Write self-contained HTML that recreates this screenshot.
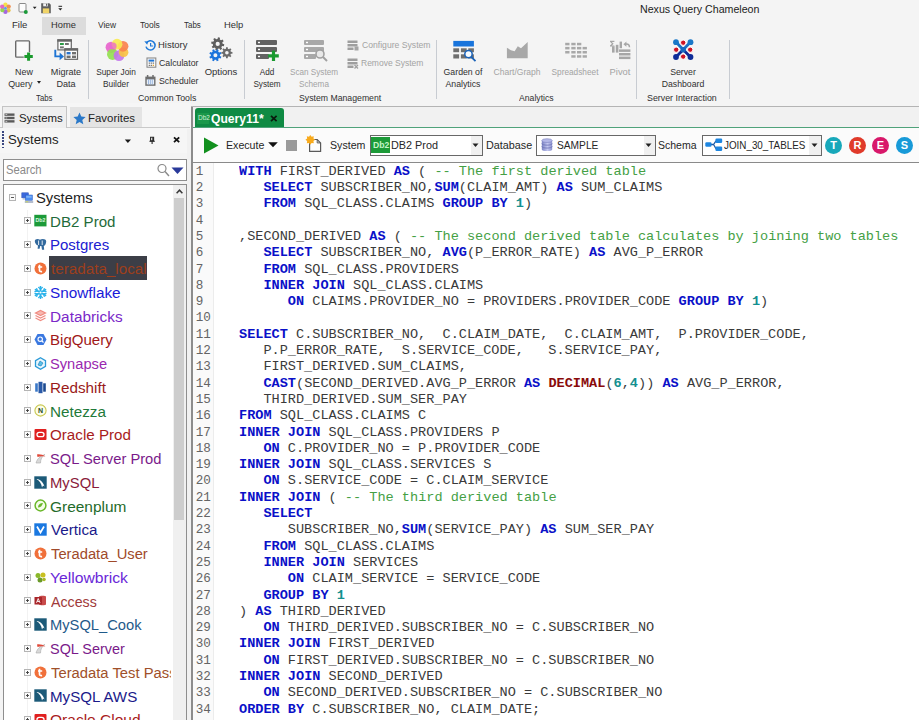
<!DOCTYPE html>
<html>
<head>
<meta charset="utf-8">
<title>Nexus Query Chameleon</title>
<style>
*{box-sizing:border-box;margin:0;padding:0}
html,body{width:919px;height:720px;overflow:hidden;background:#f4f4f4;font-family:"Liberation Sans",sans-serif;color:#1e1e1e}
.abs{position:absolute}
#app{position:relative;width:919px;height:720px;overflow:hidden;background:#f4f4f4}
.t{position:absolute;white-space:nowrap;line-height:1;transform-origin:0 0}
/* title */
#title{left:640px;top:3.6px;font-size:11.5px;color:#222;transform:scaleX(.92)}
/* menu */
.menu{top:20.300px;font-size:9.6px;color:#303030;transform:scaleX(.925)}
#hometab{left:42px;top:17px;width:44px;height:17.500px;background:#dcdcdc}
/* ribbon */
.rl{font-size:9.3px;color:#303030;margin-top:.8px;text-align:center;line-height:11.800px;white-space:nowrap;position:absolute;transform:scaleX(.943)}
.rl.la{transform-origin:0 0}
.rl.dis{color:#a3a3a3}
.grp{font-size:9.3px;color:#303030;margin-top:.6px;position:absolute;white-space:nowrap;line-height:12px;transform:scaleX(.943);transform-origin:0 0}
.sep{position:absolute;top:40px;width:1px;height:58.500px;background:#c8ccd2}
/* left panel */
#ltabline{left:0;top:127px;width:190px;height:1px;background:#c9c9c9}
#tabSys{left:2px;top:106px;width:65px;height:22px;background:#efefef;border:1px solid #c4c4c4;border-bottom:none}
#tabFav{left:70px;top:107px;width:72px;height:20px;background:#e4e4e4}
#syshead{left:0;top:129px;width:190px;height:24px;background:#f6f6f6}
#search{left:3px;top:159px;width:184px;height:21.500px;background:#fff;border:1px solid #8e8e8e}
#tree{left:3px;top:183.700px;width:184px;height:540px;background:#fff;border:1px solid #8e8e8e}
#vscroll{left:173px;top:185px;width:13px;height:535px;background:#f0f0f0}
#vthumb{left:173.700px;top:198px;width:10.600px;height:322px;background:#cdcdcd}
.ti{position:absolute;left:50px;font-size:15.5px;line-height:1;white-space:nowrap}
.exp{position:absolute;width:7px;height:7px;border:1px solid #b4b4b4;background:#fbfbfb}
.exp:before{content:"";position:absolute;left:1px;top:2px;width:3px;height:1px;background:#555}
.exp.p:after{content:"";position:absolute;left:2px;top:1px;width:1px;height:3px;background:#444}
.ic{position:absolute;width:13px;height:13px}
/* editor */
#edtabbar{left:193px;top:127px;width:726px;height:1px;background:#4fa27a}
#edtab{left:195px;top:107.500px;width:88.500px;height:20.500px;background:#0f8a43;border-radius:3px 3px 0 0}
#toolbar{left:193px;top:128px;width:726px;height:34px;background:#fbfbfb}
#splitter{left:187px;top:129px;width:4px;height:591px;background:#f1f1f1}
#editor{left:193px;top:161.500px;width:726px;height:560px;background:#fff;border-top:1px solid #8a8a8a}
#vline{left:191px;top:106px;width:2px;height:614px;background:#8c8c8c}
#hline{left:191px;top:105.500px;width:728px;height:1px;background:#b4b4b4}
#gutter{left:193px;top:163px;width:21px;height:557px;background:#fafafa;border-right:1px solid #ececec}
#code{position:absolute;left:0;top:163.800px;font-family:"Liberation Mono",monospace;font-size:12.2px;line-height:16.3px;color:#3a3a3a;white-space:pre}
#code .ln{position:absolute;left:195.800px;color:#646464;font-size:12.6px}
#code .cl{position:absolute;left:239px;transform:scaleX(1.113);transform-origin:0 0}
#code b{color:#0a10c8;font-weight:bold}
#code .c{color:#44a044}
#code .n{color:#149090;font-weight:bold}
#code .d{color:#8a0a0a;font-weight:bold}
.combo{position:absolute;top:135px;height:20.800px;background:#fff;border:1px solid #686868}
.combo:after{content:"";position:absolute;right:0;top:0;width:11.500px;height:18.800px;background:#f0f0f0}
.tb{position:absolute;font-size:10.6px;color:#262626;white-space:nowrap;line-height:1;top:140.300px}
.circ{position:absolute;top:136.700px;width:17.400px;height:17.400px;margin-left:.8px;border-radius:50%;color:#fff;font-size:11px;font-weight:bold;text-align:center;line-height:17.400px}
</style>
</head>
<body>
<div id="app">
<!-- TITLE -->
<div class="t" id="title" style="left:640.00px;;transform-origin:0 0;transform:scaleX(0.925)">Nexus Query Chameleon</div>

<!-- MENU -->
<div class="abs" id="hometab"></div>
<div class="t menu" id="m_File" style="left:12.00px;transform:scaleX(0.996)">File</div>
<div class="t menu" id="m_Home" style="left:50.50px;transform:scaleX(0.971)">Home</div>
<div class="t menu" id="m_View" style="left:98.00px;transform:scaleX(0.876)">View</div>
<div class="t menu" id="m_Tools" style="left:140.00px;transform:scaleX(0.881)">Tools</div>
<div class="t menu" id="m_Tabs" style="left:184.00px;transform:scaleX(0.828)">Tabs</div>
<div class="t menu" id="m_Help" style="left:224.00px;transform:scaleX(0.981)">Help</div>

<!-- RIBBON placeholder -->
<div id="ribbon">
<!-- quick access toolbar -->
<svg class="abs" style="left:0;top:2px" width="70" height="14" viewBox="0 0 70 14">
 <g opacity=".95">
  <circle cx="5.400" cy="2.800" r="2.200" fill="#f4e040"/><circle cx="8.600" cy="4.600" r="2.200" fill="#f08a4a"/>
  <circle cx="8.400" cy="8.200" r="2.200" fill="#e8c040"/><circle cx="5.400" cy="9.800" r="2.200" fill="#a060e0"/>
  <circle cx="2.400" cy="8" r="2.200" fill="#8fd44a"/><circle cx="2.200" cy="4.600" r="2.200" fill="#e060c0"/><circle cx="5.400" cy="6.300" r="1.500" fill="#5a9ae8"/>
 </g>
 <rect x="19" y="1.500" width="7" height="8.500" rx="1" fill="#fcfcfc" stroke="#8a8a8a" stroke-width="1"/>
 <circle cx="25.800" cy="10" r="2" fill="#1c9a3a"/>
 <path d="M32.800 4.800h3.800l-1.900 2.300z" fill="#222"/>
 <path d="M41.200 1.300h8.200l1.400 1.400v8.500h-9.600z" fill="#5e5e5e"/>
 <rect x="43.200" y="1.300" width="4.800" height="3" fill="#f0f0f0"/><rect x="46" y="1.800" width="1.300" height="2" fill="#5e5e5e"/>
 <rect x="42.800" y="6.400" width="6.400" height="4.800" fill="#f0d468"/>
 <path d="M58.500 4.300h3.600" stroke="#222" stroke-width="1"/><path d="M58.300 6.300h4l-2 2.300z" fill="#222"/>
</svg>

<!-- New Query -->
<svg class="abs" style="left:13px;top:39px" width="22" height="23" viewBox="0 0 22 23">
 <rect x="2.700" y="1.900" width="13.800" height="16.200" rx=".8" fill="#fafafa" stroke="#6a6a6a" stroke-width="1.400"/>
 <rect x="10.800" y="13" width="10" height="9.500" fill="#f4f4f4"/>
 <path d="M15.600 13.400v8.400M11.400 17.600h8.400" stroke="#1a9a2c" stroke-width="3"/>
</svg>
<div id="r_new" class="rl" style="left:4.00px;top:66px;width:40px;transform:scaleX(0.959)">New<br>Query &nbsp;&nbsp;</div><svg class="abs" style="left:36.800px;top:81.300px" width="4" height="3" viewBox="0 0 4 3"><path d="M0 0h4l-2 2.800z" fill="#222"/></svg>

<!-- Migrate Data -->
<svg class="abs" style="left:53px;top:38px" width="26" height="24" viewBox="0 0 26 24">
 <rect x="4.900" y="1.900" width="13.400" height="10" fill="#fcfcfc" stroke="#666" stroke-width="1.200"/>
 <rect x="4.300" y="1.300" width="14.600" height="2.400" fill="#666"/>
 <rect x="7" y="5" width="3.800" height="2" fill="#2a9a44"/><rect x="12" y="5" width="3.800" height="2" fill="#707070"/>
 <rect x="7" y="8.400" width="3.800" height="2" fill="#707070"/>
 <rect x="11.900" y="10.900" width="12.600" height="10.400" fill="#fcfcfc" stroke="#666" stroke-width="1.200"/>
 <rect x="11.300" y="10.300" width="13.800" height="2.400" fill="#666"/>
 <rect x="13.600" y="14" width="4" height="2.400" fill="#2a74cc"/><rect x="19" y="14" width="4" height="2.400" fill="#707070"/>
 <rect x="13.600" y="17.600" width="4" height="2.400" fill="#707070"/><rect x="19" y="17.600" width="4" height="2.400" fill="#707070"/>
 <path d="M2.300 11.800v6.600h5.200" fill="none" stroke="#1e74d4" stroke-width="1.900"/><path d="M6.600 14.600l4.400 3.800-4.400 3.800z" fill="#1e74d4"/>
</svg>
<div id="r_mig" class="rl" style="left:45.50px;top:66px;width:40px;transform:scaleX(0.978)">Migrate<br>Data</div>

<div class="sep" style="left:88px"></div>

<!-- Super Join Builder -->
<svg class="abs" style="left:104px;top:38px" width="26" height="25" viewBox="0 0 26 25"><circle cx="7.200" cy="9.300" r="5.600" fill="#e860cc" opacity=".9"/><circle cx="8.600" cy="16.300" r="5.600" fill="#92e04e" opacity=".9"/><circle cx="15" cy="17.600" r="5.400" fill="#c274ea" opacity=".9"/><circle cx="19.600" cy="14.300" r="4.800" fill="#f8c244" opacity=".92"/><circle cx="19" cy="8.300" r="5.400" fill="#f8824e" opacity=".92"/><circle cx="13" cy="6.200" r="5.400" fill="#f8ea54" opacity=".92"/><circle cx="9" cy="8" r="3.600" fill="#e868d0" opacity=".75"/></svg>
<div id="r_sj" class="rl" style="left:91.30px;top:66px;width:50px;transform:scaleX(0.893)">Super Join<br>Builder</div>

<!-- History / Calculator / Scheduler -->
<svg class="abs" style="left:144px;top:39px" width="13" height="13" viewBox="0 0 13 13">
 <path d="M2.4 4.2A4.6 4.6 0 1 1 2 7.6" fill="none" stroke="#1e78d8" stroke-width="1.5"/>
 <path d="M0.3 2.2l3.8 0.2-0.9 3.4z" fill="#1e78d8"/><path d="M6.6 4v3h2.6" fill="none" stroke="#1e78d8" stroke-width="1.2"/>
</svg>
<div id="r_his" class="rl la" style="left:158.00px;top:39.5px;transform:scaleX(1.019)">History</div>
<svg class="abs" style="left:145.500px;top:57.300px" width="11" height="11" viewBox="0 0 11 11">
 <rect x="1" y="1" width="8.800" height="9.200" fill="#fdfdfd" stroke="#8a8a8a" stroke-width="1.100"/>
 <rect x="2.600" y="2.600" width="5.600" height="2" fill="#1e74d4"/>
 <path d="M2.700 6.200h1.400M4.700 6.200h1.400M6.700 6.200h1.400" stroke="#7a7a7a" stroke-width="1.200"/><path d="M2.700 8.300h1.400M4.700 8.300h1.400" stroke="#7a7a7a" stroke-width="1.200"/><path d="M6.700 8.300h1.400" stroke="#e0a020" stroke-width="1.200"/>
</svg>
<div id="r_cal" class="rl la" style="left:159.00px;top:57.5px;transform:scaleX(0.943)">Calculator</div>
<svg class="abs" style="left:144px;top:74px" width="13" height="13" viewBox="0 0 13 13">
 <rect x="1.300" y="2.600" width="10.200" height="9.200" fill="#6e6e6e"/>
 <path d="M3.600 1v2.600M9 1v2.600" stroke="#6e6e6e" stroke-width="1.500"/>
 <rect x="2.700" y="5.400" width="7.400" height="5" fill="#e8f0fa"/>
 <path d="M4.500 5.400v5M6.400 5.400v5M8.300 5.400v5" stroke="#8aaad8" stroke-width=".8"/>
</svg>
<div id="r_sch" class="rl la" style="left:159.00px;top:75.5px;transform:scaleX(0.943)">Scheduler</div>

<!-- Options -->
<svg class="abs" style="left:208px;top:36px" width="28" height="28" viewBox="0 0 28 28"><path fill-rule="evenodd" fill="#5e5e5e" d="M14.60 7.73L16.29 8.18L15.88 10.21L14.14 9.97L13.29 11.24L14.16 12.76L12.44 13.90L11.38 12.50L9.87 12.80L9.42 14.49L7.39 14.08L7.63 12.34L6.36 11.49L4.84 12.36L3.70 10.64L5.10 9.58L4.80 8.07L3.11 7.62L3.52 5.59L5.26 5.83L6.11 4.56L5.24 3.04L6.96 1.90L8.02 3.30L9.53 3.00L9.98 1.31L12.01 1.72L11.77 3.46L13.04 4.31L14.56 3.44L15.70 5.16L14.30 6.22zM7.60 7.90a2.10 2.10 0 1 0 4.20 0a2.10 2.10 0 1 0 -4.20 0z"/><path fill-rule="evenodd" fill="#6a6a6a" d="M22.89 15.84L24.43 15.92L24.43 17.68L22.89 17.76L22.40 18.94L23.43 20.09L22.19 21.33L21.04 20.30L19.86 20.79L19.78 22.33L18.02 22.33L17.94 20.79L16.76 20.30L15.61 21.33L14.37 20.09L15.40 18.94L14.91 17.76L13.37 17.68L13.37 15.92L14.91 15.84L15.40 14.66L14.37 13.51L15.61 12.27L16.76 13.30L17.94 12.81L18.02 11.27L19.78 11.27L19.86 12.81L21.04 13.30L22.19 12.27L23.43 13.51L22.40 14.66zM17.10 16.80a1.80 1.80 0 1 0 3.60 0a1.80 1.80 0 1 0 -3.60 0z"/><path fill-rule="evenodd" fill="#1c74dc" d="M11.94 20.05L13.42 20.79L12.66 22.58L11.10 22.03L10.08 23.04L10.60 24.61L8.80 25.34L8.09 23.85L6.65 23.84L5.91 25.32L4.12 24.56L4.67 23.00L3.66 21.98L2.09 22.50L1.36 20.70L2.85 19.99L2.86 18.55L1.38 17.81L2.14 16.02L3.70 16.57L4.72 15.56L4.20 13.99L6.00 13.26L6.71 14.75L8.15 14.76L8.89 13.28L10.68 14.04L10.13 15.60L11.14 16.62L12.71 16.10L13.44 17.90L11.95 18.61zM5.40 19.30a2.00 2.00 0 1 0 4.00 0a2.00 2.00 0 1 0 -4.00 0z"/></svg>
<div id="r_opt" class="rl" style="left:196.40px;top:66px;width:50px;transform:scaleX(1.021)">Options</div>

<div class="sep" style="left:244px"></div>

<!-- Add System -->
<svg class="abs" style="left:255px;top:39px" width="27" height="23" viewBox="0 0 27 23">
 <rect x="1" y="1" width="21" height="5" rx="1" fill="#626262"/><rect x="1" y="8" width="21" height="5" rx="1" fill="#626262"/>
 <rect x="1" y="15" width="13" height="5" rx="1" fill="#626262"/>
 <rect x="3" y="2.8" width="2" height="1.4" fill="#fff"/><rect x="3" y="9.8" width="2" height="1.4" fill="#fff"/><rect x="3" y="16.8" width="2" height="1.4" fill="#fff"/>
 <path d="M18.500 11.500v10.500M13.200 16.800h10.600" stroke="#1a9a30" stroke-width="3.200"/>
</svg>
<div id="r_add" class="rl" style="left:247.40px;top:66px;width:40px;transform:scaleX(0.877)">Add<br>System</div>

<!-- Scan System Schema (disabled) -->
<svg class="abs" style="left:303px;top:39px" width="27" height="23" viewBox="0 0 27 23">
 <rect x="1" y="1" width="20" height="5" rx="1" fill="#a8a8a8"/><rect x="1" y="8" width="20" height="5" rx="1" fill="#a8a8a8"/>
 <rect x="1" y="15" width="12" height="5" rx="1" fill="#a8a8a8"/>
 <rect x="3" y="2.800" width="2" height="1.400" fill="#fff"/><rect x="3" y="9.800" width="2" height="1.400" fill="#fff"/><rect x="3" y="16.800" width="2" height="1.400" fill="#fff"/>
 <circle cx="17" cy="15" r="4" fill="#e8e8e8" stroke="#a0a0a0" stroke-width="1.6"/><path d="M20 18l4 4" stroke="#a0a0a0" stroke-width="2"/>
</svg>
<div id="r_scan" class="rl dis" style="left:284.30px;top:66px;width:60px;transform:scaleX(0.877)">Scan System<br>Schema</div>

<!-- Configure / Remove -->
<svg class="abs" style="left:347px;top:40px" width="12" height="11" viewBox="0 0 12 11">
 <rect x=".5" y=".5" width="10" height="2.500" fill="#9e9e9e"/><rect x=".5" y="4" width="10" height="2.500" fill="#9e9e9e"/><rect x=".5" y="7.500" width="6" height="2.500" fill="#9e9e9e"/>
 <rect x="7.500" y="6.500" width="4" height="4" fill="#a4a4a4"/>
</svg>
<div id="r_cfg" class="rl dis la" style="left:362.40px;top:39.5px;transform:scaleX(0.927)">Configure System</div>
<svg class="abs" style="left:347px;top:58px" width="12" height="11" viewBox="0 0 12 11">
 <rect x=".5" y=".5" width="10" height="2.500" fill="#9e9e9e"/><rect x=".5" y="4" width="10" height="2.500" fill="#9e9e9e"/><rect x=".5" y="7.500" width="6" height="2.500" fill="#9e9e9e"/>
 <path d="M7.500 7l3.500 3.500M11 7l-3.500 3.500" stroke="#a0a0a0" stroke-width="1.300"/>
</svg>
<div id="r_rem" class="rl dis la" style="left:361.00px;top:57.5px;transform:scaleX(0.914)">Remove System</div>

<div class="sep" style="left:436px"></div>

<!-- Garden of Analytics -->
<svg class="abs" style="left:452px;top:40px" width="25" height="23" viewBox="0 0 25 23">
 <rect x="1.300" y=".9" width="20.600" height="5.600" fill="#1874dc"/>
 <g fill="#6e6e6e"><rect x="1.300" y="8.300" width="5.800" height="3.900"/><rect x="8.900" y="8.300" width="5.800" height="3.900"/><rect x="16.300" y="8.300" width="5.600" height="3.900"/>
 <rect x="1.300" y="14.300" width="5.800" height="4.200"/><rect x="8.900" y="14.300" width="5.800" height="4.200"/><rect x="16.300" y="14.300" width="5.600" height="4.200"/></g>
 <circle cx="16.500" cy="14.100" r="3.700" fill="#f6fafe" stroke="#1a62b8" stroke-width="1.500"/><path d="M19.200 16.900l4.300 4.300" stroke="#1a62b8" stroke-width="1.800"/>
</svg>
<div id="r_gar" class="rl" style="left:438.30px;top:66px;width:50px;transform:scaleX(0.939)">Garden of<br>Analytics</div>

<!-- Chart/Graph -->
<svg class="abs" style="left:506px;top:41px" width="23" height="18" viewBox="0 0 23 18">
 <path d="M.9 17.200V6.800L5 9.200 8.600 10.200 11.800 5.200 15 7.200 21.700 .9V17.200z" fill="#a8a8a8"/>
</svg>
<div id="r_chart" class="rl dis" style="left:487.20px;top:66px;width:60px;transform:scaleX(0.920)">Chart/Graph</div>

<!-- Spreadsheet -->
<svg class="abs" style="left:565px;top:42px" width="23" height="17" viewBox="0 0 23 17"><g fill="#a8a8a8"><rect x="0.2" y="0.8" width="4.300" height="2.500"/><rect x="6.3" y="0.8" width="4.300" height="2.500"/><rect x="12.0" y="0.8" width="4.300" height="2.500"/><rect x="0.2" y="4.9" width="4.300" height="2.500"/><rect x="6.3" y="4.9" width="4.300" height="2.500"/><rect x="12.0" y="4.9" width="4.300" height="2.500"/><rect x="17.6" y="4.9" width="4.300" height="2.500"/><rect x="0.2" y="9.0" width="4.300" height="2.500"/><rect x="6.3" y="9.0" width="4.300" height="2.500"/><rect x="12.0" y="9.0" width="4.300" height="2.500"/><rect x="17.6" y="9.0" width="4.300" height="2.500"/><rect x="6.3" y="13.2" width="4.300" height="2.500"/><rect x="12.0" y="13.2" width="4.300" height="2.500"/><rect x="17.6" y="13.2" width="4.300" height="2.500"/></g></svg>
<div id="r_spr" class="rl dis" style="left:545.40px;top:66px;width:60px;transform:scaleX(0.889)">Spreadsheet</div>

<!-- Pivot -->
<svg class="abs" style="left:609px;top:40px" width="23" height="20" viewBox="0 0 23 20">
 <g fill="#a6a6a6">
 <path d="M1 .8h4.400v1.100H2.900l1.700 1.800-1.700 1.800h2.500v1.100H1V5.600l1.900-1.900L1 1.800z"/>
 <rect x="3" y="6.300" width="2.600" height="6.300"/><rect x="6.800" y="4.800" width="2.600" height="7.800"/><rect x="10.600" y="1.600" width="2.400" height="6.600"/>
 <rect x="10" y="9.400" width="11.400" height="2.500"/><rect x="10" y="13" width="11.400" height="2.500"/><rect x="10" y="16.600" width="11.400" height="2.500"/>
 <path d="M14.400 4.200l3-2.600v1.700c2.600 0 3.800 1.400 3.800 4h-1.500c0-1.700-.8-2.500-2.300-2.500v2z"/>
 </g>
</svg>
<div id="r_piv" class="rl dis" style="left:589.90px;top:66px;width:60px;transform:scaleX(1.005)">Pivot</div>

<div class="sep" style="left:636px"></div>

<!-- Server Dashboard -->
<svg class="abs" style="left:671px;top:38px" width="25" height="25" viewBox="0 0 25 25">
 <path d="M5 4L12.200 11.700 19.500 4" fill="none" stroke="#1a70c4" stroke-width="2.800" stroke-linecap="round"/>
 <path d="M5 19L12.200 11.700 19.500 19" fill="none" stroke="#0e2c98" stroke-width="2.800" stroke-linecap="round"/>
 <circle cx="5" cy="4.200" r="2.900" fill="#1a78c8"/><circle cx="19.500" cy="4.200" r="2.900" fill="#1a78c8"/>
 <circle cx="5" cy="19" r="2.900" fill="#0e2c98"/><circle cx="19.500" cy="19" r="2.900" fill="#0e2c98"/>
 <circle cx="12.200" cy="11.700" r="2.700" fill="#1868c0"/>
 <g fill="#d01424" stroke="#fff" stroke-width="1"><circle cx="12.200" cy="4.700" r="2.700"/><circle cx="12.200" cy="18.600" r="2.700"/><circle cx="5.200" cy="11.700" r="2.700"/><circle cx="19.200" cy="11.700" r="2.700"/></g>
</svg>
<div id="r_srv" class="rl" style="left:653.20px;top:66px;width:60px;transform:scaleX(0.935)">Server<br>Dashboard</div>

<div class="sep" style="left:729px"></div>

<!-- group labels -->
<div id="g_tabs" class="grp" style="left:36.20px;top:91px;transform:scaleX(0.835)">Tabs</div>
<div id="g_ct" class="grp" style="left:138.00px;top:91px;transform:scaleX(0.943)">Common Tools</div>
<div id="g_sm" class="grp" style="left:299.00px;top:91px;transform:scaleX(0.936)">System Management</div>
<div id="g_an" class="grp" style="left:519.10px;top:91px;transform:scaleX(0.933)">Analytics</div>
<div id="g_si" class="grp" style="left:647.40px;top:91px;transform:scaleX(0.951)">Server Interaction</div>
<div class="abs" style="left:0;top:103px;width:191px;height:26px;background:#f6f6f6"></div><div class="abs" style="left:191px;top:106px;width:728px;height:22px;background:#f1f1f1"></div>
</div>


<!-- LEFT PANEL -->
<div class="abs" id="ltabline"></div>
<div class="abs" id="tabFav"></div>
<div class="abs" id="tabSys"></div>
<div class="abs" id="syshead"></div>
<div class="abs" id="search"></div>
<div class="abs" id="tree"></div>
<div class="abs" id="vscroll"></div>
<div class="abs" id="vthumb"></div>
<svg class="abs" style="left:175.500px;top:189.300px" width="7" height="5" viewBox="0 0 7 5"><path d="M.6 4.200l2.900-3L6.400 4.200" fill="none" stroke="#3a3a3a" stroke-width="1.500"/></svg>
<div class="abs" style="left:27px;top:210px;width:1px;height:510px;background:#f2f2f2"></div>
<div id="treeitems">
<div class="exp" style="left:9px;top:194.2px"></div>
<svg class="ic" style="left:20.800px;top:191.7px" viewBox="0 0 13 13"><rect x=".8" y=".8" width="6.600" height="5" fill="#3a68dc" stroke="#2a50b4" stroke-width=".5"/><rect x="1.600" y="6" width="5" height="1.600" fill="#b8c4d8"/><rect x="4.400" y="3" width="7" height="5.400" fill="#4a8cf0" stroke="#2a58c0" stroke-width=".5"/><rect x="5.200" y="3.800" width="5.400" height="2" fill="#7ab0f8"/><rect x="3.800" y="8.800" width="8.400" height="2.200" fill="#b4bccc"/><rect x="4.600" y="9.300" width="2.600" height="1" fill="#c8d860"/></svg>
<div class="ti" id="ti0" style="left:36.1px;top:189.5px;color:#1e1e1e;transform:scaleX(0.953);transform-origin:0 0">Systems</div>
<div class="exp p" style="left:24px;top:217.3px"></div>
<svg class="ic" style="left:34px;top:214.3px" viewBox="0 0 13 13"><rect x=".3" y=".8" width="12.200" height="11.600" fill="#1c9a38"/><text x="6.400" y="8.400" font-family="Liberation Sans" font-size="5.200" font-weight="bold" fill="#dcf8e0" text-anchor="middle">Db2</text></svg>
<div class="ti" id="ti1" style="left:49.8px;top:213.5px;color:#1f6b3a;transform:scaleX(0.974);transform-origin:0 0">DB2 Prod</div>
<div class="exp p" style="left:24px;top:241.1px"></div>
<svg class="ic" style="left:34px;top:238.1px" viewBox="0 0 13 13"><path d="M.8 3c0-2 3.200-2.600 5.200-1.200C8 .4 12.200 .8 12.200 3.400c0 2.200-1.200 4-2.400 4.600l.4 3.800H8L7.400 8 6.200 8 5.600 10.800H3.600L4 7.600C2.200 7 .8 5 .8 3z" fill="#336a9e"/><path d="M4.600 2.500v4.500M8.200 2.500v4.500" stroke="#f4f8fc" stroke-width=".9"/></svg>
<div class="ti" id="ti2" style="left:49.8px;top:237.2px;color:#2020d0;transform:scaleX(0.968);transform-origin:0 0">Postgres</div>
<div class="abs" style="left:48.500px;top:256.3px;width:98.500px;height:23.500px;background:#3c3e47"></div>
<div class="exp p" style="left:24px;top:264.8px"></div>
<svg class="ic" style="left:34px;top:261.8px" viewBox="0 0 13 13"><circle cx="6.500" cy="6.500" r="6" fill="#f0703a"/><path d="M5.500 2.800v5.200c0 1.300.8 1.800 2.600 1.600M4 5h4.200" fill="none" stroke="#fff" stroke-width="1.700"/></svg>
<div class="ti" id="ti3" style="left:50.8px;top:261.0px;color:#9e3e1c;transform:scaleX(0.982);transform-origin:0 0">teradata_local</div>
<div class="exp p" style="left:24px;top:288.6px"></div>
<svg class="ic" style="left:34px;top:285.6px" viewBox="0 0 13 13"><g stroke="#2ab2ea" stroke-width="1.900" stroke-linecap="round" fill="none"><path d="M6.500 .9v11.200M1.600 3.700l9.800 5.600M1.600 9.300l9.800-5.600"/><path d="M4.600 1.400l1.900 1.800 1.900-1.800M4.600 11.600l1.900-1.800 1.900 1.800M.9 5.600l2.600-.6-.8-2.500M12.100 7.400l-2.600.6.800 2.500M.9 7.400l2.600.6-.8 2.500M12.100 5.600l-2.600-.6.800-2.500" stroke-width="1.200"/></g><circle cx="6.500" cy="6.500" r="1.100" fill="#fff"/></svg>
<div class="ti" id="ti4" style="left:49.8px;top:284.8px;color:#1a1ad8;transform:scaleX(0.987);transform-origin:0 0">Snowflake</div>
<div class="exp p" style="left:24px;top:312.3px"></div>
<svg class="ic" style="left:34px;top:309.3px" viewBox="0 0 13 13"><g fill="none" stroke="#f08a80" stroke-width="1.200"><path d="M1.500 4L6.500 1.500 11.500 4 6.500 6.500z" fill="#f8b8b0"/><path d="M1.500 6.500L6.500 9l5-2.500M1.500 9l5 2.500 5-2.500"/></g></svg>
<div class="ti" id="ti5" style="left:49.8px;top:308.5px;color:#7a28c8;transform:scaleX(0.991);transform-origin:0 0">Databricks</div>
<div class="exp p" style="left:24px;top:336.1px"></div>
<svg class="ic" style="left:34px;top:333.1px" viewBox="0 0 13 13"><path d="M3.500 1h6l3 5.500-3 5.500h-6l-3-5.500z" fill="#3a78e0"/><circle cx="6.200" cy="6.200" r="2.200" fill="none" stroke="#fff" stroke-width="1.100"/><path d="M7.800 7.800l1.700 1.700" stroke="#fff" stroke-width="1.200"/></svg>
<div class="ti" id="ti6" style="left:49.8px;top:332.2px;color:#a01818;transform:scaleX(0.971);transform-origin:0 0">BigQuery</div>
<div class="exp p" style="left:24px;top:359.8px"></div>
<svg class="ic" style="left:34px;top:356.8px" viewBox="0 0 13 13"><path d="M6.500 .8l5 2.900v5.600l-5 2.900-5-2.900V3.700z" fill="#e8f6fc" stroke="#2a9ad8" stroke-width="1.300"/><path d="M4 8l2-4 3 2-2 3z" fill="#58c0e8" stroke="#1a78b8" stroke-width=".6"/></svg>
<div class="ti" id="ti7" style="left:49.8px;top:356.0px;color:#9a28b0;transform:scaleX(0.946);transform-origin:0 0">Synapse</div>
<div class="exp p" style="left:24px;top:383.6px"></div>
<svg class="ic" style="left:34px;top:380.6px" viewBox="0 0 13 13"><rect x="4.500" y=".8" width="4" height="11.400" fill="#2a5aa8"/><rect x="1.200" y="2.300" width="2.600" height="8.400" fill="#3a78c8"/><rect x="9.200" y="2.300" width="2.600" height="8.400" fill="#1c4a90"/></svg>
<div class="ti" id="ti8" style="left:49.8px;top:379.8px;color:#9a1a1a;transform:scaleX(0.984);transform-origin:0 0">Redshift</div>
<div class="exp p" style="left:24px;top:407.3px"></div>
<svg class="ic" style="left:34px;top:404.3px" viewBox="0 0 13 13"><circle cx="6.500" cy="6.500" r="5.600" fill="#fdfde8" stroke="#c8c850" stroke-width="1.100"/><text x="6.500" y="9" font-family="Liberation Sans" font-weight="bold" font-size="7" fill="#1a4a2a" text-anchor="middle">N</text></svg>
<div class="ti" id="ti9" style="left:49.8px;top:403.5px;color:#1f7a3a;transform:scaleX(0.984);transform-origin:0 0">Netezza</div>
<div class="exp p" style="left:24px;top:431.1px"></div>
<svg class="ic" style="left:34px;top:428.1px" viewBox="0 0 13 13"><rect x=".5" y="1" width="12" height="11" rx="1" fill="#e02020"/><rect x="3" y="4.300" width="7" height="4.400" rx="2.200" fill="none" stroke="#fff" stroke-width="1.300"/></svg>
<div class="ti" id="ti10" style="left:49.8px;top:427.2px;color:#a81c1c;transform:scaleX(0.979);transform-origin:0 0">Oracle Prod</div>
<div class="exp p" style="left:24px;top:454.8px"></div>
<svg class="ic" style="left:34px;top:451.8px" viewBox="0 0 13 13"><path d="M2 11C3 7 6 4 11 2.500 8 4.500 6.500 7 6.500 11z" fill="#d8d8d8" stroke="#a8a8a8" stroke-width=".6"/><path d="M3 2.500c3-.5 6 .5 8.500 2C9 4 6 4 3.500 5z" fill="#e04a3a"/></svg>
<div class="ti" id="ti11" style="left:49.6px;top:451.0px;color:#7a1a8a;transform:scaleX(0.949);transform-origin:0 0">SQL Server Prod</div>
<div class="exp p" style="left:24px;top:478.6px"></div>
<svg class="ic" style="left:34px;top:475.6px" viewBox="0 0 13 13"><rect x=".3" y=".3" width="12.400" height="12.400" fill="#1c5a78"/><path d="M2.500 3c3 0 6 2 8 7.500L9 9.500 8 11.500C7.500 7.500 5.500 5 2.500 3z" fill="#fff"/></svg>
<div class="ti" id="ti12" style="left:49.6px;top:474.8px;color:#8a1a3a;transform:scaleX(0.956);transform-origin:0 0">MySQL</div>
<div class="exp p" style="left:24px;top:502.3px"></div>
<svg class="ic" style="left:34px;top:499.3px" viewBox="0 0 13 13"><circle cx="6.500" cy="6.500" r="5.400" fill="#f4fce8" stroke="#6ab82a" stroke-width="1.500"/><path d="M4 8.500c0-3 2-4.500 5-4.500-1 3-2.500 4.500-5 4.500z" fill="#6ab82a"/></svg>
<div class="ti" id="ti13" style="left:49.6px;top:498.5px;color:#1f6b2a;transform:scaleX(0.996);transform-origin:0 0">Greenplum</div>
<div class="exp p" style="left:24px;top:526.0px"></div>
<svg class="ic" style="left:34px;top:523.0px" viewBox="0 0 13 13"><rect x=".3" y=".3" width="12.400" height="12.400" fill="#1a78e0"/><path d="M3 3.500l3.500 6 3.500-6" fill="none" stroke="#fff" stroke-width="1.700"/></svg>
<div class="ti" id="ti14" style="left:50.6px;top:522.2px;color:#1a1a8a;transform:scaleX(0.980);transform-origin:0 0">Vertica</div>
<div class="exp p" style="left:24px;top:549.8px"></div>
<svg class="ic" style="left:34px;top:546.8px" viewBox="0 0 13 13"><circle cx="6.500" cy="6.500" r="6" fill="#f0703a"/><path d="M5.500 2.800v5.200c0 1.300.8 1.800 2.600 1.600M4 5h4.200" fill="none" stroke="#fff" stroke-width="1.700"/></svg>
<div class="ti" id="ti15" style="left:50.6px;top:546.0px;color:#a04a2a;transform:scaleX(0.952);transform-origin:0 0">Teradata_User</div>
<div class="exp p" style="left:24px;top:573.5px"></div>
<svg class="ic" style="left:34px;top:570.5px" viewBox="0 0 13 13"><circle cx="4" cy="4.500" r="2.500" fill="#8ab82a"/><circle cx="9" cy="4" r="2.500" fill="#c8c020"/><circle cx="6" cy="9" r="2.500" fill="#6a9a2a"/><circle cx="10" cy="8.500" r="1.800" fill="#a8b828"/></svg>
<div class="ti" id="ti16" style="left:49.6px;top:569.8px;color:#6a28d8;transform:scaleX(1.013);transform-origin:0 0">Yellowbrick</div>
<div class="exp p" style="left:24px;top:597.3px"></div>
<svg class="ic" style="left:34px;top:594.3px" viewBox="0 0 13 13"><path d="M5 2.500c0-1 7-1 7 0v8c0 1-7 1-7 0z" fill="#c84a4a"/><rect x=".5" y="3" width="7.500" height="7.500" fill="#a8262a"/><path d="M2.500 8.800L4.200 4.500 6 8.800M3.200 7.500h2" fill="none" stroke="#fff" stroke-width=".9"/></svg>
<div class="ti" id="ti17" style="left:50.6px;top:593.5px;color:#a03a3a;transform:scaleX(0.917);transform-origin:0 0">Access</div>
<div class="exp p" style="left:24px;top:621.0px"></div>
<svg class="ic" style="left:34px;top:618.0px" viewBox="0 0 13 13"><rect x=".3" y=".3" width="12.400" height="12.400" fill="#1c5a78"/><path d="M2.500 3c3 0 6 2 8 7.500L9 9.500 8 11.500C7.500 7.500 5.500 5 2.500 3z" fill="#fff"/></svg>
<div class="ti" id="ti18" style="left:49.6px;top:617.2px;color:#1f5a8a;transform:scaleX(0.949);transform-origin:0 0">MySQL_Cook</div>
<div class="exp p" style="left:24px;top:644.8px"></div>
<svg class="ic" style="left:34px;top:641.8px" viewBox="0 0 13 13"><path d="M2 11C3 7 6 4 11 2.500 8 4.500 6.500 7 6.500 11z" fill="#d8d8d8" stroke="#a8a8a8" stroke-width=".6"/><path d="M3 2.500c3-.5 6 .5 8.500 2C9 4 6 4 3.500 5z" fill="#e04a3a"/></svg>
<div class="ti" id="ti19" style="left:49.6px;top:641.0px;color:#7a1a8a;transform:scaleX(0.931);transform-origin:0 0">SQL Server</div>
<div class="exp p" style="left:24px;top:668.5px"></div>
<svg class="ic" style="left:34px;top:665.5px" viewBox="0 0 13 13"><circle cx="6.500" cy="6.500" r="6" fill="#f0703a"/><path d="M5.500 2.800v5.200c0 1.300.8 1.800 2.600 1.600M4 5h4.200" fill="none" stroke="#fff" stroke-width="1.700"/></svg>
<div class="ti" id="ti20" style="left:50.7px;top:664.8px;color:#a0502a;transform:scaleX(.955);transform-origin:0 0;width:127.500px;overflow:hidden;clip-path:inset(0 2px 0 0)">Teradata Test Pass</div>
<div class="exp p" style="left:24px;top:692.3px"></div>
<svg class="ic" style="left:34px;top:689.3px" viewBox="0 0 13 13"><rect x=".3" y=".3" width="12.400" height="12.400" fill="#1c5a78"/><path d="M2.500 3c3 0 6 2 8 7.500L9 9.500 8 11.500C7.500 7.500 5.500 5 2.500 3z" fill="#fff"/></svg>
<div class="ti" id="ti21" style="left:49.6px;top:688.5px;color:#1a1a8a;transform:scaleX(0.977);transform-origin:0 0">MySQL AWS</div>
<div class="exp p" style="left:24px;top:716.0px"></div>
<svg class="ic" style="left:34px;top:713.0px" viewBox="0 0 13 13"><rect x=".5" y="1" width="12" height="11" rx="1" fill="#e02020"/><rect x="3" y="4.300" width="7" height="4.400" rx="2.200" fill="none" stroke="#fff" stroke-width="1.300"/></svg>
<div class="ti" id="ti22" style="left:49.6px;top:712.2px;color:#a81c1c;transform:scaleX(1.002);transform-origin:0 0">Oracle Cloud</div>
<!-- left tabs content -->
<svg class="abs" style="left:4.200px;top:113px" width="11" height="10" viewBox="0 0 11 11"><rect x="0" y=".5" width="11" height="2.600" fill="#5a5a5a"/><rect x="0" y="4.200" width="11" height="2.600" fill="#5a5a5a"/><rect x="0" y="7.900" width="11" height="2.600" fill="#5a5a5a"/><rect x="1" y="1.400" width="2" height=".8" fill="#ddd"/><rect x="1" y="5.100" width="2" height=".8" fill="#ddd"/><rect x="1" y="8.800" width="2" height=".8" fill="#ddd"/></svg>
<div class="t" id="lt1" style="left:19.4px;top:113.15px;font-size:11.5px;color:#222;transform:scaleX(0.993);transform-origin:0 0">Systems</div>
<svg class="abs" style="left:73px;top:111.500px" width="13" height="13" viewBox="0 0 13 13"><path d="M6.500 .6l1.800 4 4.300.4-3.300 2.900 1 4.300-3.800-2.300-3.800 2.300 1-4.300L.4 5l4.300-.4z" fill="#2a78c8"/></svg>
<div class="t" id="lt2" style="left:88.2px;top:113.15px;font-size:11.5px;color:#222;transform:scaleX(0.993);transform-origin:0 0">Favorites</div>
<!-- header -->
<div class="abs" style="left:2px;top:131px;width:2px;height:17px;background:repeating-linear-gradient(#3a4680 0 1.600px,transparent 1.600px 3.100px)"></div>
<div class="t" id="lh" style="left:8.0px;top:133.400px;font-size:13.500px;color:#1e1e1e;transform:scaleX(0.978);transform-origin:0 0">Systems</div>
<svg class="abs" style="left:123px;top:136px" width="60" height="11" viewBox="0 0 60 11"><path d="M1.800 3.600h6.200l-3.100 3.300z" fill="#1a1a1a"/><path d="M27.600 1.200h3v3.700h-3z" fill="#f4f4f4" stroke="#2a2a2a" stroke-width="1.100"/><path d="M30 1.200v3.700" stroke="#2a2a2a" stroke-width="1.400"/><path d="M26.400 5.200h5.400M29.100 5.200v2.800" fill="none" stroke="#2a2a2a" stroke-width="1.100"/><path d="M51 1.400l5.200 4.800M56.200 1.400L51 6.200" stroke="#111" stroke-width="1.800"/></svg>
<!-- search -->
<div class="t" id="ls" style="left:6.2px;top:164px;font-size:12px;color:#8a8a8a;transform:scaleX(0.936);transform-origin:0 0">Search</div>
<svg class="abs" style="left:156px;top:162px" width="30" height="16" viewBox="0 0 30 16"><circle cx="6" cy="6.500" r="4" fill="none" stroke="#8a8a8a" stroke-width="1.200"/><path d="M9 9.500l4 4.500" stroke="#8a8a8a" stroke-width="1.400"/><path d="M15.500 5.500h12l-6 6.500z" fill="#2a3a9a"/></svg>

</div>

<!-- EDITOR -->
<div class="abs" id="splitter"></div>
<div class="abs" id="edtab"></div>
<div class="abs" id="edtabbar"></div>
<div class="abs" id="toolbar"></div>
<div class="abs" id="editor"></div>
<div class="abs" id="gutter"></div>
<div class="abs" id="vline"></div>
<div class="abs" id="hline"></div>
<div id="tbitems">
<!-- editor tab content -->
<div class="abs" style="left:196.500px;top:113px;width:12px;height:10.500px;background:#1a984a"></div><div class="t" style="left:198px;top:114.800px;font-size:6.500px;color:#d0f0d6">Db2</div>
<div class="t" id="et" style="left:211.2px;top:111.700px;font-size:13px;font-weight:bold;color:#fff;transform:scaleX(0.933);transform-origin:0 0">Query11*</div>
<svg class="abs" style="left:270px;top:115px" width="8" height="7" viewBox="0 0 8 7"><path d="M1 .8l5.600 5.400M6.600 .8L1 6.200" stroke="#0a1a0e" stroke-width="1.700"/></svg>
<!-- toolbar -->
<svg class="abs" style="left:203px;top:137px" width="16" height="17" viewBox="0 0 16 17"><path d="M1 .5l14.500 8L1 16.500z" fill="#12901e"/></svg>
<div class="tb" id="tb1" style="left:225.8px;transform:scaleX(1.003);transform-origin:0 0">Execute</div>
<svg class="abs" style="left:268px;top:141.800px" width="10" height="6" viewBox="0 0 10 6"><path d="M.2 .3h9.600l-4.800 5z" fill="#111"/></svg>
<div class="abs" style="left:286px;top:140.300px;width:11px;height:10.400px;background:#9a9a9a"></div>
<svg class="abs" style="left:304px;top:134px" width="22" height="22" viewBox="0 0 22 22"><path d="M5.600 5.500h7.600l3.400 3.400v8.400h-11z" fill="#fdfdfd" stroke="#5a5a5a" stroke-width="1.200"/><path d="M13.200 5.500v3.400h3.400" fill="none" stroke="#5a5a5a" stroke-width="1"/><path d="M11.20 5.80L9.44 7.10L9.76 9.26L7.60 8.94L6.30 10.70L5.00 8.94L2.84 9.26L3.16 7.10L1.40 5.80L3.16 4.50L2.84 2.34L5.00 2.66L6.30 0.90L7.60 2.66L9.76 2.34L9.44 4.50z" fill="#f8aa1c"/></svg>
<div class="tb" id="tb2" style="left:329.8px;transform:scaleX(1.002);transform-origin:0 0">System</div>
<div class="combo" style="left:369.500px;width:113.500px"></div>
<div class="abs" style="left:371.300px;top:137.200px;width:19px;height:15.400px;background:#1c9a38"></div>
<div class="t" style="left:373px;top:140.600px;font-size:9px;color:#c4f4c8;font-weight:bold;transform:scaleX(.96)">Db2</div>
<div class="tb" id="tb3" style="left:390.9px;transform:scaleX(1.023);transform-origin:0 0">DB2 Prod</div>
<svg class="abs" style="left:472px;top:143px" width="7" height="5" viewBox="0 0 7 5"><path d="M.5 .5h6l-3 3.600z" fill="#222"/></svg>
<div class="tb" id="tb4" style="left:486.2px;transform:scaleX(1.018);transform-origin:0 0">Database</div>
<div class="combo" style="left:535.500px;width:120.500px"></div>
<svg class="abs" style="left:541px;top:137.500px" width="12" height="14" viewBox="0 0 12 14"><defs><linearGradient id="dbg" x1="0" x2="1"><stop offset="0" stop-color="#7a82c4"/><stop offset=".55" stop-color="#c4c8f0"/><stop offset="1" stop-color="#8a90cc"/></linearGradient></defs><path d="M.8 2.600v8.800c0 2.200 10.400 2.200 10.400 0V2.600z" fill="url(#dbg)"/><ellipse cx="6" cy="2.600" rx="5.200" ry="1.900" fill="#b4b8e8" stroke="#7a80c0" stroke-width=".6"/><path d="M.8 5.500c0 2.200 10.400 2.200 10.400 0M.8 8.400c0 2.200 10.400 2.200 10.400 0" fill="none" stroke="#6a70b4" stroke-width=".8"/></svg>
<div class="tb" id="tb5" style="left:556.8px;transform:scaleX(0.962);transform-origin:0 0">SAMPLE</div>
<svg class="abs" style="left:645px;top:143px" width="7" height="5" viewBox="0 0 7 5"><path d="M.5 .5h6l-3 3.600z" fill="#222"/></svg>
<div class="tb" id="tb6" style="left:658.2px;transform:scaleX(0.992);transform-origin:0 0">Schema</div>
<div class="combo" style="left:702px;width:119.500px"></div>
<svg class="abs" style="left:704.500px;top:138px" width="18" height="14" viewBox="0 0 18 14"><path d="M6 6.500h2.600M8.600 6.500L11 2.800M8.600 6.500L11 10.800" fill="none" stroke="#1c58a4" stroke-width="1.300"/><rect x=".3" y="4.300" width="6.200" height="4.400" rx="1.200" fill="#1e86e0"/><rect x="10.400" y=".6" width="6.800" height="4.400" rx="1.200" fill="#1e86e0"/><rect x="10.400" y="8.600" width="6.800" height="4.400" rx="1.200" fill="#1e86e0"/></svg>
<div class="tb" id="tb7" style="left:723.8px;transform:scaleX(0.929);transform-origin:0 0">JOIN_30_TABLES</div>
<svg class="abs" style="left:811px;top:143px" width="7" height="5" viewBox="0 0 7 5"><path d="M.5 .5h6l-3 3.600z" fill="#222"/></svg>
<div class="circ" style="left:824px;background:#18a8ba">T</div>
<div class="circ" style="left:848px;background:#e03a2a">R</div>
<div class="circ" style="left:871px;background:#d8186a">E</div>
<div class="circ" style="left:895px;background:#189ad8">S</div>

</div>
<div id="code">
<span class="ln" style="top:0.0px">1</span><span class="cl" style="top:0.0px"><b>WITH</b> FIRST_DERIVED <b>AS</b> ( <span class="c">-- The first derived table</span></span>
<span class="ln" style="top:16.3px">2</span><span class="cl" style="top:16.3px">   <b>SELECT</b> SUBSCRIBER_NO,<b>SUM</b>(CLAIM_AMT) <b>AS</b> SUM_CLAIMS</span>
<span class="ln" style="top:32.6px">3</span><span class="cl" style="top:32.6px">   <b>FROM</b> SQL_CLASS.CLAIMS <b>GROUP</b> <b>BY</b> <span class="n">1</span>)</span>
<span class="ln" style="top:48.9px">4</span><span class="cl" style="top:48.9px"></span>
<span class="ln" style="top:65.2px">5</span><span class="cl" style="top:65.2px">,SECOND_DERIVED <b>AS</b> ( <span class="c">-- The second derived table calculates by joining two tables</span></span>
<span class="ln" style="top:81.5px">6</span><span class="cl" style="top:81.5px">   <b>SELECT</b> SUBSCRIBER_NO, <b>AVG</b>(P_ERROR_RATE) <b>AS</b> AVG_P_ERROR</span>
<span class="ln" style="top:97.8px">7</span><span class="cl" style="top:97.8px">   <b>FROM</b> SQL_CLASS.PROVIDERS</span>
<span class="ln" style="top:114.1px">8</span><span class="cl" style="top:114.1px">   <b>INNER</b> <b>JOIN</b> SQL_CLASS.CLAIMS</span>
<span class="ln" style="top:130.4px">9</span><span class="cl" style="top:130.4px">      <b>ON</b> CLAIMS.PROVIDER_NO = PROVIDERS.PROVIDER_CODE <b>GROUP</b> <b>BY</b> <span class="n">1</span>)</span>
<span class="ln" style="top:146.7px">10</span><span class="cl" style="top:146.7px"></span>
<span class="ln" style="top:163.0px">11</span><span class="cl" style="top:163.0px"><b>SELECT</b> C.SUBSCRIBER_NO,  C.CLAIM_DATE,  C.CLAIM_AMT,  P.PROVIDER_CODE,</span>
<span class="ln" style="top:179.3px">12</span><span class="cl" style="top:179.3px">   P.P_ERROR_RATE,  S.SERVICE_CODE,   S.SERVICE_PAY,</span>
<span class="ln" style="top:195.6px">13</span><span class="cl" style="top:195.6px">   FIRST_DERIVED.SUM_CLAIMS,</span>
<span class="ln" style="top:211.9px">14</span><span class="cl" style="top:211.9px">   <b>CAST</b>(SECOND_DERIVED.AVG_P_ERROR <b>AS</b> <span class="d">DECIMAL</span>(<span class="n">6</span>,<span class="n">4</span>)) <b>AS</b> AVG_P_ERROR,</span>
<span class="ln" style="top:228.2px">15</span><span class="cl" style="top:228.2px">   THIRD_DERIVED.SUM_SER_PAY</span>
<span class="ln" style="top:244.5px">16</span><span class="cl" style="top:244.5px"><b>FROM</b> SQL_CLASS.CLAIMS C</span>
<span class="ln" style="top:260.8px">17</span><span class="cl" style="top:260.8px"><b>INNER</b> <b>JOIN</b> SQL_CLASS.PROVIDERS P</span>
<span class="ln" style="top:277.1px">18</span><span class="cl" style="top:277.1px">   <b>ON</b> C.PROVIDER_NO = P.PROVIDER_CODE</span>
<span class="ln" style="top:293.4px">19</span><span class="cl" style="top:293.4px"><b>INNER</b> <b>JOIN</b> SQL_CLASS.SERVICES S</span>
<span class="ln" style="top:309.7px">20</span><span class="cl" style="top:309.7px">   <b>ON</b> S.SERVICE_CODE = C.CLAIM_SERVICE</span>
<span class="ln" style="top:326.0px">21</span><span class="cl" style="top:326.0px"><b>INNER</b> <b>JOIN</b> ( <span class="c">-- The third derived table</span></span>
<span class="ln" style="top:342.3px">22</span><span class="cl" style="top:342.3px">   <b>SELECT</b></span>
<span class="ln" style="top:358.6px">23</span><span class="cl" style="top:358.6px">      SUBSCRIBER_NO,<b>SUM</b>(SERVICE_PAY) <b>AS</b> SUM_SER_PAY</span>
<span class="ln" style="top:374.9px">24</span><span class="cl" style="top:374.9px">   <b>FROM</b> SQL_CLASS.CLAIMS</span>
<span class="ln" style="top:391.2px">25</span><span class="cl" style="top:391.2px">   <b>INNER</b> <b>JOIN</b> SERVICES</span>
<span class="ln" style="top:407.5px">26</span><span class="cl" style="top:407.5px">      <b>ON</b> CLAIM_SERVICE = SERVICE_CODE</span>
<span class="ln" style="top:423.8px">27</span><span class="cl" style="top:423.8px">   <b>GROUP</b> <b>BY</b> <span class="n">1</span></span>
<span class="ln" style="top:440.1px">28</span><span class="cl" style="top:440.1px">) <b>AS</b> THIRD_DERIVED</span>
<span class="ln" style="top:456.4px">29</span><span class="cl" style="top:456.4px">   <b>ON</b> THIRD_DERIVED.SUBSCRIBER_NO = C.SUBSCRIBER_NO</span>
<span class="ln" style="top:472.7px">30</span><span class="cl" style="top:472.7px"><b>INNER</b> <b>JOIN</b> FIRST_DERIVED</span>
<span class="ln" style="top:489.0px">31</span><span class="cl" style="top:489.0px">   <b>ON</b> FIRST_DERIVED.SUBSCRIBER_NO = C.SUBSCRIBER_NO</span>
<span class="ln" style="top:505.3px">32</span><span class="cl" style="top:505.3px"><b>INNER</b> <b>JOIN</b> SECOND_DERIVED</span>
<span class="ln" style="top:521.6px">33</span><span class="cl" style="top:521.6px">   <b>ON</b> SECOND_DERIVED.SUBSCRIBER_NO = C.SUBSCRIBER_NO</span>
<span class="ln" style="top:537.9px">34</span><span class="cl" style="top:537.9px"><b>ORDER</b> <b>BY</b> C.SUBSCRIBER_NO, CLAIM_DATE;</span>
<span class="ln" style="top:554.2px">35</span><span class="cl" style="top:554.2px"></span>
</div>
</div>
</body>
</html>
